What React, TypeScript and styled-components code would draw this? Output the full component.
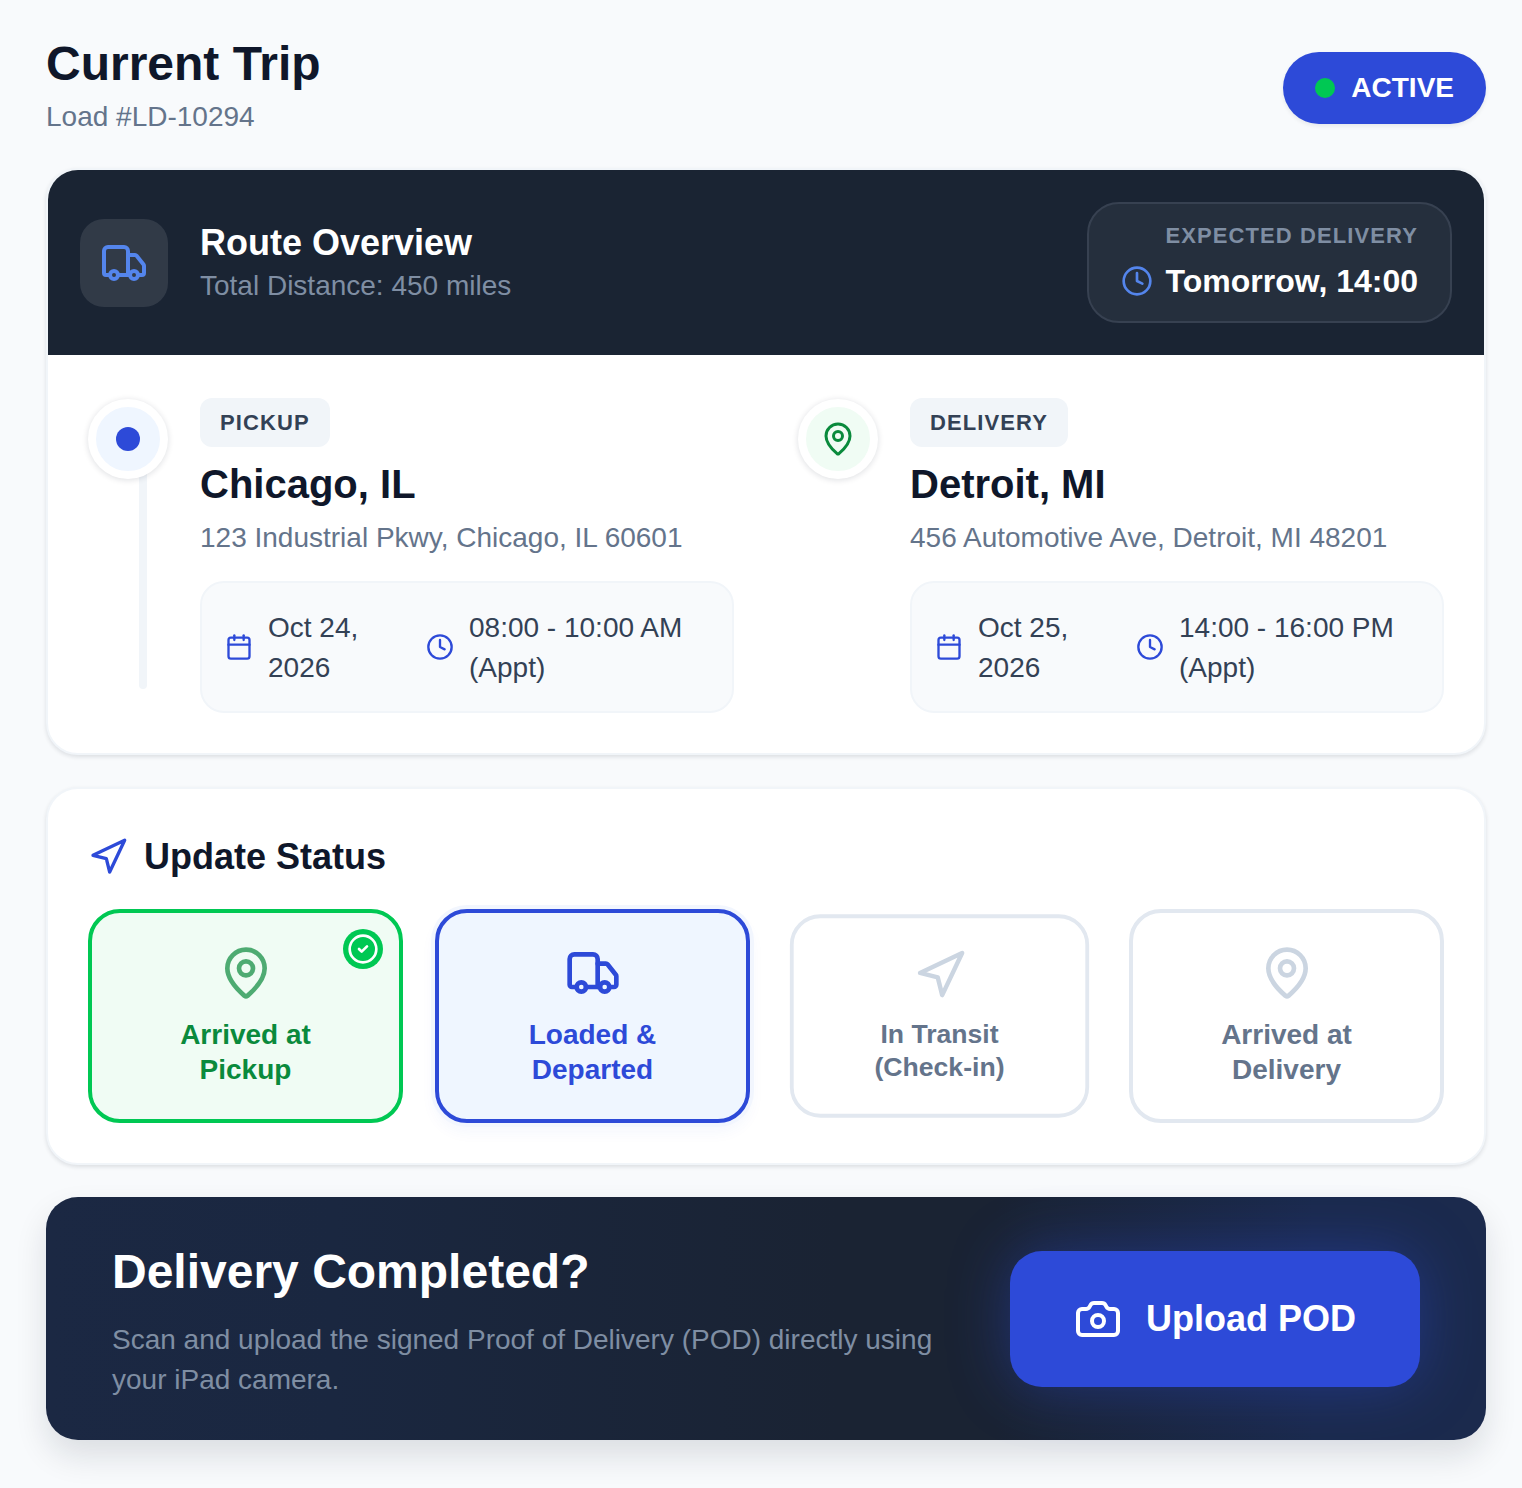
import styled, { createGlobalStyle } from "styled-components";
import { Calendar, Camera, CircleCheck, Clock, MapPin, Navigation, Truck } from "lucide-react";

const GlobalStyle = createGlobalStyle`
  * {
    box-sizing: border-box;
  }
  body {
    margin: 0;
    background: #f8fafc;
    font-family: "Liberation Sans", Arial, sans-serif;
  }
`;

const stops = [
  {
    label: "PICKUP",
    city: "Chicago, IL",
    address: "123 Industrial Pkwy, Chicago, IL 60601",
    date: "Oct 24, 2026",
    window: "08:00 - 10:00 AM (Appt)",
  },
  {
    label: "DELIVERY",
    city: "Detroit, MI",
    address: "456 Automotive Ave, Detroit, MI 48201",
    date: "Oct 25, 2026",
    window: "14:00 - 16:00 PM (Appt)",
  },
];

const App = () => {
  return (
    <Page>
      <GlobalStyle />
      <Header>
        <div>
          <Title>Current Trip</Title>
          <LoadNumber>Load #LD-10294</LoadNumber>
        </div>
        <ActivePill>
          <ActiveDot />
          ACTIVE
        </ActivePill>
      </Header>

      <Card>
        <RouteBar>
          <RouteInfo>
            <RouteIcon>
              <Truck size={48} />
            </RouteIcon>
            <div>
              <RouteTitle>Route Overview</RouteTitle>
              <RouteDistance>Total Distance: 450 miles</RouteDistance>
            </div>
          </RouteInfo>
          <Expected>
            <ExpectedLabel>EXPECTED DELIVERY</ExpectedLabel>
            <ExpectedValue>
              <Clock size={32} />
              Tomorrow, 14:00
            </ExpectedValue>
          </Expected>
        </RouteBar>
        <Stops>
          {stops.map((stop, index) => (
            <Stop key={stop.label}>
              {index === 0 && <StopLine />}
              <StopMarker $delivery={index === 1}>
                {index === 0 ? <PickupDot /> : <MapPin size={36} />}
              </StopMarker>
              <StopBody>
                <StopLabel>{stop.label}</StopLabel>
                <City>{stop.city}</City>
                <Address>{stop.address}</Address>
                <Schedule>
                  <ScheduleItem>
                    <Calendar size={28} />
                    <span>{stop.date}</span>
                  </ScheduleItem>
                  <ScheduleItem>
                    <Clock size={28} />
                    <span>{stop.window}</span>
                  </ScheduleItem>
                </Schedule>
              </StopBody>
            </Stop>
          ))}
        </Stops>
      </Card>

      <StatusCard>
        <StatusHeading>
          <Navigation size={40} />
          Update Status
        </StatusHeading>
        <StatusGrid>
          <StatusButton $state="done">
            <DoneBadge>
              <CircleCheck size={32} />
            </DoneBadge>
            <StatusIcon $state="done">
              <MapPin size={56} />
            </StatusIcon>
            <StatusLabel>
              Arrived at
              <br />
              Pickup
            </StatusLabel>
          </StatusButton>
          <StatusButton $state="current">
            <StatusIcon $state="current">
              <Truck size={56} />
            </StatusIcon>
            <StatusLabel>
              Loaded &amp;
              <br />
              Departed
            </StatusLabel>
          </StatusButton>
          <StatusButton $state="pending" $pressed>
            <StatusIcon $state="pending">
              <Navigation size={56} />
            </StatusIcon>
            <StatusLabel>
              In Transit
              <br />
              (Check-in)
            </StatusLabel>
          </StatusButton>
          <StatusButton $state="pending">
            <StatusIcon $state="pending">
              <MapPin size={56} />
            </StatusIcon>
            <StatusLabel>
              Arrived at
              <br />
              Delivery
            </StatusLabel>
          </StatusButton>
        </StatusGrid>
      </StatusCard>

      <UploadCard>
        <UploadText>
          <UploadTitle>Delivery Completed?</UploadTitle>
          <UploadHint>
            Scan and upload the signed Proof of Delivery (POD) directly using your iPad camera.
          </UploadHint>
        </UploadText>
        <UploadButton>
          <Camera size={48} />
          Upload POD
        </UploadButton>
      </UploadCard>
    </Page>
  );
};

export default App;

const Page = styled.div`
  display: flex;
  flex-direction: column;
  gap: 32px;
  min-height: 1488px;
  padding: 32px 36px 48px 46px;
  background: #f8fafc;
`;
const Header = styled.header`
  display: flex;
  justify-content: space-between;
  align-items: flex-start;
`;
const Title = styled.h1`
  margin: 0;
  font-size: 48px;
  line-height: 64px;
  font-weight: 700;
  color: #0f172a;
`;
const LoadNumber = styled.p`
  margin: 3px 0 1px;
  font-size: 28px;
  line-height: 36px;
  color: #64748b;
`;
const ActivePill = styled.div`
  display: flex;
  align-items: center;
  gap: 16px;
  height: 72px;
  margin-top: 20px;
  padding: 0 32px;
  border-radius: 36px;
  background: #2d4ad8;
  color: #fff;
  font-size: 28px;
  font-weight: 700;
  box-shadow: 0 2px 4px rgba(15, 23, 42, 0.08);
`;
const ActiveDot = styled.span`
  width: 20px;
  height: 20px;
  border-radius: 50%;
  background: #00c853;
`;
const Card = styled.section`
  overflow: hidden;
  border: 2px solid #f1f5f9;
  border-radius: 32px;
  background: #fff;
  box-shadow: 0 2px 4px rgba(15, 23, 42, 0.12);
`;
const RouteBar = styled.div`
  display: flex;
  justify-content: space-between;
  align-items: center;
  height: 185px;
  padding: 0 32px;
  background: #1a2433;
`;
const RouteInfo = styled.div`
  display: flex;
  align-items: center;
  gap: 32px;
`;
const RouteIcon = styled.div`
  display: flex;
  align-items: center;
  justify-content: center;
  width: 88px;
  height: 88px;
  border-radius: 24px;
  background: rgba(255, 255, 255, 0.1);
  color: #5485ec;
`;
const RouteTitle = styled.h2`
  margin: 2px 0 0;
  font-size: 36px;
  line-height: 44px;
  font-weight: 700;
  color: #fff;
`;
const RouteDistance = styled.p`
  margin: 1px 0 0;
  font-size: 28px;
  line-height: 40px;
  color: #7f8ea3;
`;
const Expected = styled.div`
  display: flex;
  flex-direction: column;
  align-items: flex-end;
  gap: 7px;
  height: 121px;
  padding: 16px 32px;
  border: 2px solid #374151;
  border-radius: 32px;
  background: rgba(255, 255, 255, 0.05);
`;
const ExpectedLabel = styled.span`
  font-size: 22px;
  line-height: 32px;
  font-weight: 700;
  letter-spacing: 1.1px;
  color: #7f8ea3;
`;
const ExpectedValue = styled.span`
  display: flex;
  align-items: center;
  gap: 13px;
  font-size: 32px;
  line-height: 44px;
  font-weight: 700;
  color: #fff;
  svg {
    color: #5485ec;
  }
`;
const Stops = styled.div`
  display: grid;
  grid-template-columns: 1fr 1fr;
  gap: 64px;
  padding: 43px 40px 40px;
`;
const Stop = styled.div`
  position: relative;
  display: flex;
  gap: 32px;
`;
const StopLine = styled.span`
  position: absolute;
  left: 51px;
  top: 40px;
  bottom: 24px;
  width: 8px;
  border-radius: 4px;
  background: #f1f5f9;
`;
const StopMarker = styled.div<{ $delivery: boolean }>`
  position: relative;
  display: flex;
  flex-shrink: 0;
  align-items: center;
  justify-content: center;
  width: 80px;
  height: 80px;
  margin-top: 1px;
  border: 8px solid #fff;
  border-radius: 50%;
  background: ${(p) => (p.$delivery ? "#f0fcf4" : "#eff6ff")};
  color: #0a8a3c;
  box-shadow: 0 1px 6px rgba(15, 23, 42, 0.14);
`;
const PickupDot = styled.span`
  width: 24px;
  height: 24px;
  border-radius: 50%;
  background: #2d4ad8;
`;
const StopBody = styled.div`
  flex: 1;
  min-width: 0;
`;
const StopLabel = styled.span`
  display: inline-block;
  padding: 8px 20px;
  border-radius: 12px;
  background: #f1f5f9;
  font-size: 22px;
  line-height: 33px;
  font-weight: 700;
  letter-spacing: 1.1px;
  color: #334155;
`;
const City = styled.h3`
  margin: 9px 0 0;
  font-size: 40px;
  line-height: 56px;
  font-weight: 700;
  color: #0f172a;
`;
const Address = styled.p`
  margin: 4px 0 0;
  font-size: 28px;
  line-height: 44px;
  color: #64748b;
`;
const Schedule = styled.div`
  display: grid;
  grid-template-columns: 177px 1fr;
  column-gap: 24px;
  align-items: center;
  margin-top: 21px;
  padding: 24px 24px 24px 23px;
  border: 2px solid #f1f5f9;
  border-radius: 24px;
  background: #f8fafc;
`;
const ScheduleItem = styled.div`
  display: flex;
  align-items: center;
  gap: 15px;
  font-size: 28px;
  line-height: 40px;
  color: #334155;
  svg {
    flex-shrink: 0;
    color: #2d4ad8;
  }
  span {
    margin: 1px 0 -1px;
  }
`;
const StatusCard = styled(Card)`
  padding: 48px 40px 40px;
`;
const StatusHeading = styled.h2`
  display: flex;
  align-items: center;
  gap: 16px;
  margin: 0 0 32px;
  font-size: 36px;
  line-height: 40px;
  font-weight: 700;
  color: #0f172a;
  svg {
    color: #2d4ad8;
  }
`;
const StatusGrid = styled.div`
  display: grid;
  grid-template-columns: repeat(4, 1fr);
  gap: 32px;
`;
const statusColors = {
  done: { border: "#00c853", bg: "#f0fcf4", text: "#0a8a3c", icon: "#0a8a3c" },
  current: { border: "#2d4ad8", bg: "#eff6ff", text: "#2d4ad8", icon: "#2d4ad8" },
  pending: { border: "#e2e8f0", bg: "#fff", text: "#64748b", icon: "#cbd5e1" },
};
type StatusState = keyof typeof statusColors;

const StatusButton = styled.div<{ $state: StatusState; $pressed?: boolean }>`
  position: relative;
  display: flex;
  flex-direction: column;
  align-items: center;
  gap: 16px;
  padding: 32px 16px;
  border: 4px solid ${(p) => statusColors[p.$state].border};
  border-radius: 32px;
  background: ${(p) => statusColors[p.$state].bg};
  color: ${(p) => statusColors[p.$state].text};
  box-shadow: ${(p) =>
    p.$state === "current" ? "0 0 0 4px #f2f6fe, 0 8px 16px rgba(45, 74, 216, 0.05)" : "none"};
  transform: ${(p) => (p.$pressed ? "scale(0.95)" : "none")};
`;
const StatusIcon = styled.span<{ $state: StatusState }>`
  display: flex;
  color: ${(p) => statusColors[p.$state].icon};
  opacity: ${(p) => (p.$state === "done" ? 0.7 : 1)};
`;
const StatusLabel = styled.span`
  font-size: 28px;
  line-height: 35px;
  font-weight: 700;
  text-align: center;
`;
const DoneBadge = styled.span`
  position: absolute;
  top: 16px;
  right: 16px;
  display: flex;
  align-items: center;
  justify-content: center;
  width: 40px;
  height: 40px;
  border-radius: 50%;
  background: #00c853;
  color: #fff;
`;
const UploadCard = styled.section`
  display: flex;
  justify-content: space-between;
  align-items: center;
  height: 243px;
  padding: 0 66px;
  border-radius: 32px;
  background: linear-gradient(90deg, #1b2843 0%, #1a2740 20%, #1a2333 55%, #1a2333 66%, #1b2a4d 88%);
  box-shadow: 0 16px 32px rgba(15, 23, 42, 0.12);
`;
const UploadText = styled.div`
  width: 830px;
  margin-top: 7px;
`;
const UploadTitle = styled.h2`
  margin: 0 0 20px;
  font-size: 48px;
  line-height: 56px;
  font-weight: 700;
  color: #fff;
`;
const UploadHint = styled.p`
  margin: 0;
  font-size: 28px;
  line-height: 40px;
  color: #7f8ea3;
`;
const UploadButton = styled.div`
  display: flex;
  align-items: center;
  gap: 24px;
  height: 136px;
  padding: 0 64px;
  border-radius: 32px;
  background: #2d4ad8;
  color: #fff;
  font-size: 36px;
  font-weight: 700;
  box-shadow: 0 0 60px rgba(45, 74, 216, 0.4);
`;
